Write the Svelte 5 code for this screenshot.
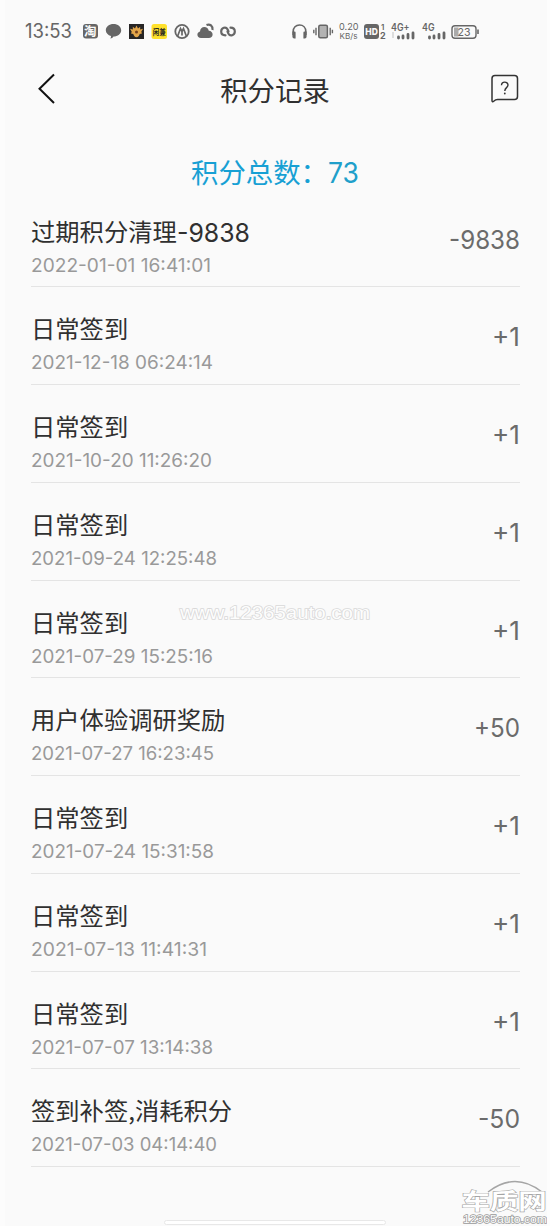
<script>
  const rows = [
    { title: '过期积分清理', tail: '-9838', date: '2022-01-01 16:41:01', w: 180, value: '-9838', vw: 71 },
    { title: '日常签到', date: '2021-12-18 06:24:14', w: 182, value: '+1', vw: 28 },
    { title: '日常签到', date: '2021-10-20 11:26:20', w: 181, value: '+1', vw: 28 },
    { title: '日常签到', date: '2021-09-24 12:25:48', w: 186, value: '+1', vw: 28 },
    { title: '日常签到', date: '2021-07-29 15:25:16', w: 182, value: '+1', vw: 28 },
    { title: '用户体验调研奖励', date: '2021-07-27 16:23:45', w: 183, value: '+50', vw: 46 },
    { title: '日常签到', date: '2021-07-24 15:31:58', w: 183, value: '+1', vw: 28 },
    { title: '日常签到', date: '2021-07-13 11:41:31', w: 176, value: '+1', vw: 28 },
    { title: '日常签到', date: '2021-07-07 13:14:38', w: 182, value: '+1', vw: 28 },
    { title: '签到补签,消耗积分', date: '2021-07-03 04:14:40', w: 186, value: '-50', vw: 42 }
  ];
</script>

<div class="screen">
  <svg class="status" width="550" height="62" viewBox="0 0 550 62">
    <text x="25" y="38" font-size="19.5" textLength="47" lengthAdjust="spacingAndGlyphs">13:53</text>
    <rect x="83" y="24" width="15" height="14.5" rx="3" />
    <text x="84" y="35.8" font-size="12.500" class="cjk" fill="#fafafa" font-weight="700">淘</text>
    <path d="M113.500 24c4.300 0 7.700 2.700 7.700 6.300s-3.400 6.300-7.700 6.300c-.7 1.200-1.800 1.800-3.200 2 .6-.8.8-1.600.7-2.500-3-.9-5.200-3-5.200-5.800 0-3.600 3.400-6.300 7.700-6.300z" />
    <rect x="129" y="24" width="15" height="15" fill="#272525" />
    <path d="M136.500 25.500l1.500 3 2.200-1.700-.1 2.700 2.900-.7-1.700 3 .7 1.800-2.300.4c-.5 2-1.500 3.200-3.200 3.200s-2.700-1.200-3.200-3.200l-2.300-.4.700-1.800-1.700-3 2.900.7-.1-2.700 2.200 1.700z" fill="#e2a549" />
    <circle cx="136.500" cy="32" r="1.500" fill="#74401e" />
    <rect x="151.500" y="24" width="15.500" height="15" rx="2.500" fill="#ffe12c" />
    <text x="152.800" y="34.700" font-size="8.500" textLength="13" lengthAdjust="spacingAndGlyphs" class="cjk" fill="#292820" font-weight="700">闲兼</text>
    <circle cx="182" cy="31.500" r="6.700" fill="none" stroke="#666" stroke-width="1.800" />
    <path d="M177.500 36.500l3-8 1.500 3 1.500-3 3 8M182 31.500v4" fill="none" stroke="#666" stroke-width="1.700" />
    <path d="M201 38c-2.200 0-3.600-1.500-3.600-3.300 0-1.700 1-3 2.600-3.300.2-2.600 2-4.300 4.300-4.300 2.400 0 4 1.500 4.500 3.700 2.300.2 3.800 1.600 3.800 3.600 0 2.100-1.500 3.600-3.800 3.600z" />
    <path d="M206.500 25c3.500-1.500 6.500 1 6 5" fill="none" stroke="#666" stroke-width="2.200" />
    <path d="M225.500 35.300c-2.500 0-4.300-1.500-4.300-3.800 0-4.100 4.800-5 6.300-2.200l1 2.200M230.500 27.700c2.500 0 4.300 1.500 4.300 3.800 0 4.100-4.800 5-6.300 2.200l-1-2.200" fill="none" stroke="#666" stroke-width="2.200" stroke-linecap="round" />
    <path d="M293.200 35v-3.500c0-3.900 2.700-6.500 6.300-6.500s6.300 2.600 6.300 6.500V35" fill="none" stroke="#666" stroke-width="1.600" />
    <path d="M292.400 31.500h2.200a1 1 0 0 1 1 1v6h-1.400a2 2 0 0 1-1.800-2zM306.600 31.500h-2.200a1 1 0 0 0-1 1v6h1.400a2 2 0 0 0 1.800-2z" />
    <rect x="318.800" y="25.300" width="8.600" height="12.500" rx="1.500" fill="#b3b3b3" stroke="#666" stroke-width="1.500" />
    <path d="M316 27.700v7.600M330.200 27.700v7.600M313.800 29.800v3.500M332.400 29.800v3.500" stroke="#666" stroke-width="1.400" />
    <text x="339" y="29.800" font-size="8.800" textLength="19.500" lengthAdjust="spacingAndGlyphs">0.20</text>
    <text x="339.500" y="38.700" font-size="8" textLength="18" lengthAdjust="spacingAndGlyphs">KB/s</text>
    <rect x="364" y="24" width="15" height="15" rx="3" />
    <text x="365.300" y="35" font-size="9.500" textLength="12.500" lengthAdjust="spacingAndGlyphs" fill="#fafafa" font-weight="800">HD</text>
    <text x="381" y="30" font-size="8" font-weight="600">1</text>
    <text x="380" y="39" font-size="9" font-weight="700">2</text>
    <text x="391" y="31" font-size="10" font-weight="600" textLength="18.500" lengthAdjust="spacingAndGlyphs">4G+</text>
    <path d="M393 32v6" stroke="#ddd" stroke-width="2" />
    <path d="M398.500 38v-1M403 38v-2M408 38v-3.500M413 38v-5" stroke="#666" stroke-width="2.800" stroke-linecap="round" />
    <text x="422" y="31" font-size="10" font-weight="600" textLength="12.500" lengthAdjust="spacingAndGlyphs">4G</text>
    <path d="M429.500 38v-1M434 38v-2M439 38v-3.500M444 38v-5" stroke="#666" stroke-width="2.800" stroke-linecap="round" />
    <rect x="452" y="25.700" width="24" height="12.500" rx="3" fill="none" stroke="#666" stroke-width="1.400" />
    <path d="M454 27.500h4.500v9H454z" fill="#aaa" />
    <path d="M478 29.500v4.500" stroke="#666" stroke-width="1.600" />
    <text x="457.500" y="36" font-size="11" textLength="13" lengthAdjust="spacingAndGlyphs">23</text>
  </svg>

  <header>
    <svg class="back" width="20" height="32" viewBox="0 0 20 32">
      <path d="M17 1.500L2.500 15.800 17 30" fill="none" stroke="#111" stroke-width="2" />
    </svg>
    <h1>积分记录</h1>
    <svg class="help" width="30" height="30" viewBox="0 0 30 30">
      <path d="M2 26.500V4.500Q2 1.500 5 1.500H24.500Q27.500 1.500 27.500 4.500V22.500Q27.500 25.500 24.500 25.500H7.500Q5.500 25.500 4 27Q2 28.800 2 26.500Z" fill="none" stroke="#333" stroke-width="1.500" />
      <path d="M11.500 11.300C11.500 7 18 7.200 18 11C18 13.800 14.800 13.500 14.800 17" fill="none" stroke="#333" stroke-width="1.400" />
      <circle cx="14.800" cy="19.500" r=".9" fill="#333" />
    </svg>
  </header>

  <div class="total"><span>积分总数：</span><svg width="32" height="32"><text x="0" y="27.5" textLength="31" lengthAdjust="spacingAndGlyphs">73</text></svg></div>

  <main>
    {#each rows as r}
      <section>
        <div class="info">
          <div class="title">{r.title}{#if r.tail}<svg width="74" height="30"><text x="0" y="24.5" textLength="73" lengthAdjust="spacingAndGlyphs">{r.tail}</text></svg>{/if}</div>
          <svg class="date" width="200" height="24"><text x="0" y="22" textLength={r.w} lengthAdjust="spacingAndGlyphs">{r.date}</text></svg>
        </div>
        <svg class="value" width={r.vw} height="30"><text x="0" y="24" textLength={r.vw} lengthAdjust="spacingAndGlyphs">{r.value}</text></svg>
      </section>
    {/each}
  </main>

  <svg class="watermark" width="200" height="30">
    <text x="5" y="20" textLength="190" lengthAdjust="spacingAndGlyphs">www.12365auto.com</text>
  </svg>

  <svg class="brand" width="90" height="48" viewBox="460 1178 90 48">
    <path d="M488 1192Q515 1171 542 1192" fill="none" stroke="#a5a5a5" stroke-width="1.500" />
    <g class="logo">
      <text class="cjk" transform="translate(461.500 1208.500) scale(1.160 .88)" font-size="24.500">车质网</text>
    </g>
    <text class="site" x="463" y="1222.500" font-size="10" textLength="84" lengthAdjust="spacingAndGlyphs">12365auto.com</text>
  </svg>
  <div class="home"></div>
</div>

<style>
  :global(body) { margin: 0; background: #fafafa; }
  .screen {
    position: relative;
    box-sizing: border-box;
    width: 550px;
    height: 1226px;
    overflow: hidden;
    background: #fafafa;
    border-left: 5px solid #fcfcfc;
    border-right: 3px solid #fdfdfd;
    font-family: Inter, "Noto Sans CJK SC", sans-serif;
    color: #303030;
  }
  svg { display: block; flex: none; overflow: visible; }
  .status { margin-left: -5px; fill: #666; }
  .cjk { font-family: "Noto Sans CJK SC", sans-serif; }
  header {
    display: flex;
    align-items: center;
    justify-content: space-between;
    height: 54px;
    padding: 0 27px 0 32px;
  }
  h1 {
    margin: 0 0 0 3px;
    font: 400 27.4px/40px "Noto Sans CJK SC", sans-serif;
  }
  .total {
    display: flex;
    align-items: center;
    height: 40px;
    margin-top: 35px;
    padding-left: 186px;
    font: 400 27.4px/40px "Noto Sans CJK SC", sans-serif;
    color: #17a0d4;
  }
  .total svg { font: 400 28.500px Inter, sans-serif; fill: #209fca; }
  main { margin-left: 26px; width: 489px; padding-top: 4px; }
  section {
    box-sizing: border-box;
    display: flex;
    justify-content: space-between;
    height: 97.75px;
    padding-top: 22px;
    border-bottom: 1px solid #e4e4e4;
  }
  section:first-child { height: 92.250px; padding-top: 16.500px; }
  .title {
    display: flex;
    height: 38px;
    font: 400 24.300px/38px "Noto Sans CJK SC", sans-serif;
  }
  .title svg { margin-top: 5px; font: 400 26px Inter, sans-serif; fill: #303030; }
  .date { font: 400 18.600px Inter, sans-serif; fill: #999; }
  .value { margin-top: 13px; font: 400 26px Inter, sans-serif; fill: #6b6b6b; }
  .watermark {
    position: absolute;
    left: 170px;
    top: 599px;
    font: 400 18px "Liberation Sans", sans-serif;
    fill: #fdfdfd;
    stroke: #d8d8d8;
    stroke-width: 1.500px;
    paint-order: stroke;
  }
  .brand { position: absolute; left: 455px; top: 1178px; }
  .logo { font-weight: 700; fill: #fff; stroke: #a5a5a5; stroke-width: 1.300px; paint-order: stroke; }
  .site { font-family: "Liberation Sans", sans-serif; font-weight: 400; fill: #fff; stroke: #999; stroke-width: 1.300px; paint-order: stroke; }
  .home {
    position: absolute;
    left: 159px;
    top: 1220px;
    box-sizing: border-box;
    width: 222px;
    height: 5px;
    border: 1px solid #e8e8e8;
    border-radius: 3px;
    background: #fff;
  }
</style>
